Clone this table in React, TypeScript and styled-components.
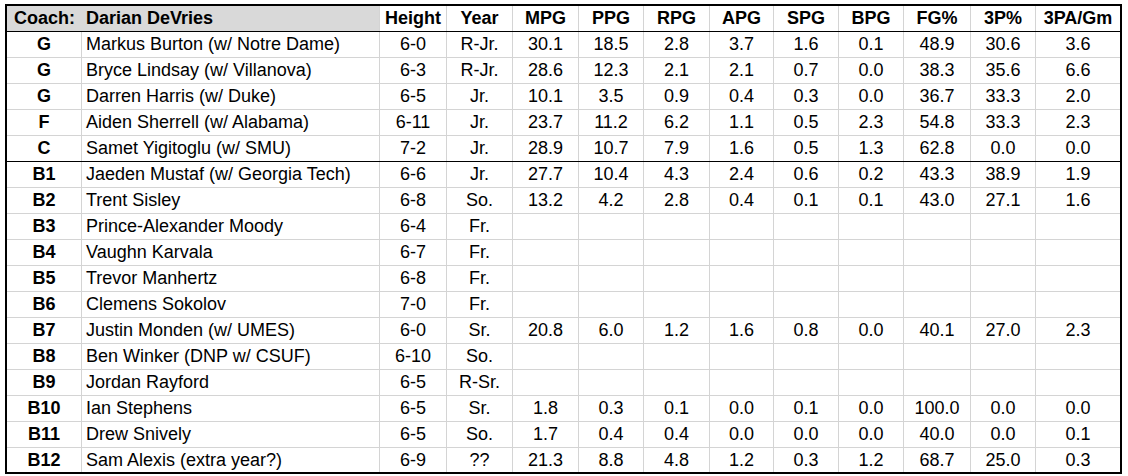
import React from 'react'
import styled, { createGlobalStyle } from 'styled-components'

const GlobalStyle = createGlobalStyle`
  html, body {
    margin: 0;
    padding: 0;
    background: #ffffff;
  }
  body {
    font-family: "Liberation Sans", Arial, sans-serif;
    color: #000;
  }
`

const COLS = '75px 298px 67px 66px 66px 65px 66px 64px 65px 65px 67px 65px 84px'

const Page = styled.div`
  padding: 4px 0 0 5px;
`

const Sheet = styled.div`
  display: inline-block;
  border: 2px solid #000;
`

const Row = styled.div<{ $divider?: boolean; $last?: boolean }>`
  display: grid;
  grid-template-columns: ${COLS};
  height: ${(p) => (p.$last ? '24px' : '26px')};
  box-sizing: border-box;
  border-bottom: ${(p) =>
    p.$last ? 'none' : p.$divider ? '1px solid #000' : '1px solid #d4d4d4'};
`

const Cell = styled.div<{ $bold?: boolean; $left?: boolean; $gray?: boolean; $open?: boolean }>`
  box-sizing: border-box;
  display: flex;
  align-items: center;
  justify-content: ${(p) => (p.$left ? 'flex-start' : 'center')};
  padding: ${(p) => (p.$left ? '0 0 0 4px' : '0')};
  font-size: 18px;
  font-weight: ${(p) => (p.$bold ? 700 : 400)};
  white-space: nowrap;
  background: ${(p) => (p.$gray ? '#d9d9d9' : 'transparent')};
  border-right: ${(p) => (p.$open ? 'none' : '1px solid #d4d4d4')};
  &:last-child {
    border-right: none;
  }
`

const CoachLabel = styled(Cell)`
  padding-left: 7px;
`

const heads = ['Height', 'Year', 'MPG', 'PPG', 'RPG', 'APG', 'SPG', 'BPG', 'FG%', '3P%', '3PA/Gm']

type Player = [string, string, string, string, ...string[]]

const players: Player[] = [
  ['G', 'Markus Burton (w/ Notre Dame)', '6-0', 'R-Jr.', '30.1', '18.5', '2.8', '3.7', '1.6', '0.1', '48.9', '30.6', '3.6'],
  ['G', 'Bryce Lindsay (w/ Villanova)', '6-3', 'R-Jr.', '28.6', '12.3', '2.1', '2.1', '0.7', '0.0', '38.3', '35.6', '6.6'],
  ['G', 'Darren Harris (w/ Duke)', '6-5', 'Jr.', '10.1', '3.5', '0.9', '0.4', '0.3', '0.0', '36.7', '33.3', '2.0'],
  ['F', 'Aiden Sherrell (w/ Alabama)', '6-11', 'Jr.', '23.7', '11.2', '6.2', '1.1', '0.5', '2.3', '54.8', '33.3', '2.3'],
  ['C', 'Samet Yigitoglu (w/ SMU)', '7-2', 'Jr.', '28.9', '10.7', '7.9', '1.6', '0.5', '1.3', '62.8', '0.0', '0.0'],
  ['B1', 'Jaeden Mustaf (w/ Georgia Tech)', '6-6', 'Jr.', '27.7', '10.4', '4.3', '2.4', '0.6', '0.2', '43.3', '38.9', '1.9'],
  ['B2', 'Trent Sisley', '6-8', 'So.', '13.2', '4.2', '2.8', '0.4', '0.1', '0.1', '43.0', '27.1', '1.6'],
  ['B3', 'Prince-Alexander Moody', '6-4', 'Fr.'],
  ['B4', 'Vaughn Karvala', '6-7', 'Fr.'],
  ['B5', 'Trevor Manhertz', '6-8', 'Fr.'],
  ['B6', 'Clemens Sokolov', '7-0', 'Fr.'],
  ['B7', 'Justin Monden (w/ UMES)', '6-0', 'Sr.', '20.8', '6.0', '1.2', '1.6', '0.8', '0.0', '40.1', '27.0', '2.3'],
  ['B8', 'Ben Winker (DNP w/ CSUF)', '6-10', 'So.'],
  ['B9', 'Jordan Rayford', '6-5', 'R-Sr.'],
  ['B10', 'Ian Stephens', '6-5', 'Sr.', '1.8', '0.3', '0.1', '0.0', '0.1', '0.0', '100.0', '0.0', '0.0'],
  ['B11', 'Drew Snively', '6-5', 'So.', '1.7', '0.4', '0.4', '0.0', '0.0', '0.0', '40.0', '0.0', '0.1'],
  ['B12', 'Sam Alexis (extra year?)', '6-9', '??', '21.3', '8.8', '4.8', '1.2', '0.3', '1.2', '68.7', '25.0', '0.3'],
]

export default function App() {
  return (
    <Page>
      <GlobalStyle />
      <Sheet>
        <Row $divider>
          <CoachLabel $bold $left $gray $open>Coach:</CoachLabel>
          <Cell $bold $left $gray>Darian DeVries</Cell>
          {heads.map((h) => (
            <Cell key={h} $bold>{h}</Cell>
          ))}
        </Row>
        {players.map((p, i) => {
          const [pos, name, ...rest] = p
          const stats = Array.from({ length: 11 }, (_, k) => rest[k] ?? '')
          return (
            <Row key={pos} $divider={pos === 'C'} $last={i === players.length - 1}>
              <Cell $bold>{pos}</Cell>
              <Cell $left>{name}</Cell>
              {stats.map((s, k) => (
                <Cell key={k}>{s}</Cell>
              ))}
            </Row>
          )
        })}
      </Sheet>
    </Page>
  )
}
